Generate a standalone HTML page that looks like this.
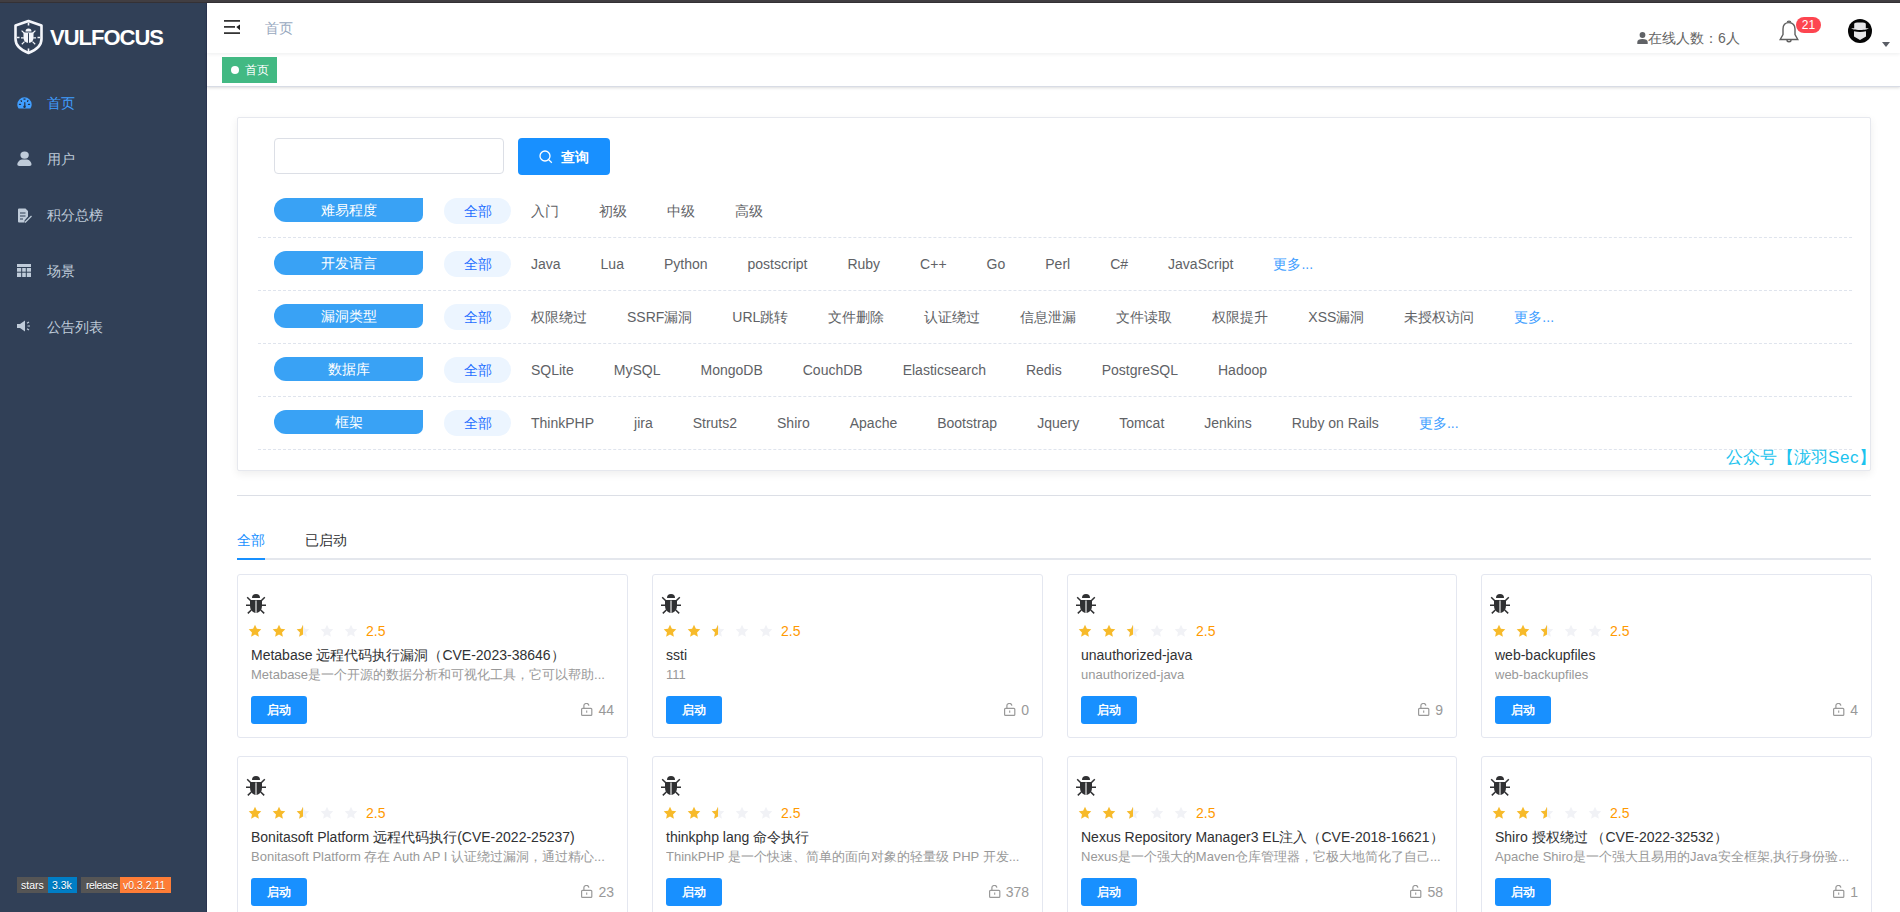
<!DOCTYPE html>
<html><head><meta charset="utf-8">
<style>
*{box-sizing:border-box;margin:0;padding:0}
html,body{width:1900px;height:912px;overflow:hidden;background:#fff;font-family:"Liberation Sans",sans-serif;font-size:14px;color:#606266}
#topbar{position:absolute;left:0;top:0;width:1900px;height:3px;background:linear-gradient(#413e42 0,#413e42 2px,#343135 2px)}
#side{position:absolute;left:0;top:3px;width:207px;height:909px;background:#314057;box-shadow:inset -1px 0 0 #2a3450}
#logo{position:absolute;left:14px;top:17px}
#logotxt{position:absolute;left:50px;top:22px;line-height:26px;color:#fff;font-weight:bold;font-size:22px;letter-spacing:-1px}
.mi{position:absolute;left:0;width:207px;height:56px;line-height:56px;color:#bfcbd9;font-size:14px}
.mi span{position:absolute;left:47px;top:0}
.mi svg{position:absolute;left:17px;top:21px}
.mi.act{color:#409eff}
#badges{position:absolute;left:17px;top:874px;height:16px;font-size:10px;line-height:16px;color:#fff}
#badges div{position:absolute;top:0;height:16px}#badges span{position:absolute;top:0;white-space:nowrap;font-size:10.5px;text-shadow:0 1px 0 rgba(1,1,1,.3)}
#main{position:absolute;left:207px;top:3px;width:1693px;height:909px;background:#fff}
#nav{position:absolute;z-index:2;left:0;top:0;width:1693px;height:50px;background:#fff;box-shadow:0 1px 4px rgba(0,21,41,.08)}
#tags{position:absolute;left:0;top:50px;width:1693px;height:34px;background:#fff;border-bottom:1px solid #d8dce5;box-shadow:0 1px 3px 0 rgba(0,0,0,.12),0 0 3px 0 rgba(0,0,0,.04)}
.tag{position:absolute;left:15px;top:4px;height:26px;line-height:26px;background:#42b983;color:#fff;font-size:12px;padding:0 8px 0 9px;width:55px;white-space:nowrap}
.tag:before{content:"";display:inline-block;width:8px;height:8px;border-radius:50%;background:#fff;margin-right:6px;vertical-align:0px}
#filter{position:absolute;left:30px;top:114px;width:1634px;height:354px;border:1px solid #e6e8ee;border-radius:2px;background:#fff;box-shadow:0 3px 8px 0 rgba(0,0,0,.07)}
.inp{position:absolute;left:36px;top:20px;width:230px;height:36px;border:1px solid #dcdfe6;border-radius:4px;background:#fff}
.btn{position:absolute;left:280px;top:20px;width:92px;height:37px;background:#1890ff;border-radius:4px;color:#fff;font-size:14px;line-height:37px}
.row{position:absolute;left:20px;width:1594px;height:53px;border-bottom:1px dashed #dfe4ed}
.lab{position:absolute;left:16px;top:13px;width:149px;height:24px;line-height:24px;background:#39a2f5;color:#fff;text-align:center;border-radius:12px 0 7px 12px;font-size:14px}
.opts{position:absolute;left:185px;top:13px;height:26px;line-height:26px;white-space:nowrap;font-size:14px;color:#606266}
.opts span{display:inline-block;padding:0 0 0 20px;height:26px;border-radius:13px;overflow:visible;vertical-align:top}
.opts span.on{background:#ecf5ff;color:#1f6fff;text-align:center;padding:0}
.opts span.more{color:#409eff}
#wm{position:absolute;left:1519px;top:443px;color:#1cc3ee;font-size:17px;letter-spacing:.6px;white-space:nowrap}
#divider{position:absolute;left:30px;top:492px;width:1634px;height:1px;background:#dcdfe6}
#tabs{position:absolute;left:30px;top:517px;width:1634px;height:40px}
#tabs .bar{position:absolute;left:0;bottom:0;width:100%;height:2px;background:#e4e7ed}
#tabs .ab{position:absolute;left:0;bottom:0;width:28px;height:2px;background:#1890ff}
#tabs span{position:absolute;top:0;line-height:40px;font-size:14px;color:#303133}
.card{position:absolute;width:391px;height:164px;border:1px solid #e4e7f0;border-radius:3px;background:#fff}
.card .bug{position:absolute;left:8px;top:19px}
.rate{position:absolute;left:8px;top:47px;width:200px;height:18px}
.st{position:absolute;top:0;width:18px;height:18px}
.st.on{fill:#f7ba2a}.st.off{fill:#f1f2f6}
.sc{position:absolute;left:120px;top:0;line-height:18px;font-size:14px;color:#ff9900}
.ti{position:absolute;left:13px;top:70px;line-height:20px;font-size:14px;color:#303133;white-space:nowrap}
.ds{position:absolute;left:13px;top:90px;line-height:20px;font-size:13px;color:#999;white-space:nowrap;overflow:hidden;width:362px}
.go{position:absolute;left:13px;top:121px;width:56px;height:28px;line-height:28px;text-align:center;background:#1890ff;color:#fff;font-size:12px;border-radius:3px;font-weight:bold}
.cnt{position:absolute;right:13px;top:125px;height:20px;line-height:20px;font-size:14px;color:#999;white-space:nowrap}
.cnt svg{vertical-align:-1px;margin-right:5px;margin-left:2px}
i{font-style:normal;display:inline-block;width:1em;text-align:center;text-indent:0}
</style></head><body>
<svg width="0" height="0" style="position:absolute"><defs>
<symbol id="star" viewBox="0 0 18 18"><path d="M9.00 2.80 L10.88 6.81 L15.28 7.36 L12.04 10.39 L12.88 14.74 L9.00 12.60 L5.12 14.74 L5.96 10.39 L2.72 7.36 L7.12 6.81Z"/></symbol>
<symbol id="starh" viewBox="0 0 18 18"><path fill="#f1f2f6" d="M9.00 2.80 L10.88 6.81 L15.28 7.36 L12.04 10.39 L12.88 14.74 L9.00 12.60 L5.12 14.74 L5.96 10.39 L2.72 7.36 L7.12 6.81Z"/><path fill="#f7ba2a" d="M9.00 2.80 L7.12 6.81 L2.72 7.36 L5.96 10.39 L5.12 14.74 L9.00 12.60Z"/></symbol>
<symbol id="bug" viewBox="0 0 20 20"><g fill="#303133"><path d="M6 4A4 4 0 0 1 14 4Z"/><path d="M4 6H16V11.5C16 15.8 13.6 18.8 10 18.8C6.4 18.8 4 15.8 4 11.5Z"/></g><path d="M10 6.5V18.8" stroke="#ddd" stroke-width="1.3"/><g stroke="#303133" stroke-width="1.5"><path d="M1.2 3.2L5 7M18.8 3.2L15 7M0 11.2H4.5M20 11.2H15.5M1.8 19.4L5.3 16M18.2 19.4L14.7 16"/></g></symbol>
<symbol id="lock" viewBox="0 0 12 13"><rect x="0.6" y="5.4" width="10.2" height="6.9" rx="0.9" fill="none" stroke="#999" stroke-width="1.2"/><path d="M2.9 5.4V3.3A2.5 2.5 0 0 1 7.9 2.6" fill="none" stroke="#999" stroke-width="1.2"/><path d="M5.7 7.6v2.2" stroke="#999" stroke-width="1.1"/></symbol>
</defs></svg>
<div id="topbar"></div>
<div id="side">
  <svg id="logo" width="31" height="36" viewBox="0 0 31 36" style="position:absolute;left:13px;top:16px"><path d="M15.5 2L28.5 6.5V20C28.5 27 22 31.5 15.5 34C9 31.5 2.5 27 2.5 20V6.5Z" fill="none" stroke="#f4f6fb" stroke-width="2.6" stroke-linejoin="round"/><g stroke="#f4f6fb" stroke-width="1.6"><path d="M15.5 3.5V6.5M15.5 29.5V33M4 18.5H6.5M24.5 18.5H27"/></g><g fill="#f4f6fb"><path d="M12.5 12.6A3 3.2 0 0 1 18.5 12.6Z"/><path d="M10.5 13.4H20.5V18.5C20.5 22 18.4 23.9 15.5 23.9S10.5 22 10.5 18.5Z"/></g><path d="M15.5 14.2V24" stroke="#314057" stroke-width="1"/><g stroke="#f4f6fb" stroke-width="1.2"><path d="M8.6 11.6L11.4 14.2M22.4 11.6L19.6 14.2M8 18.8H10.8M23 18.8H20.2M8.8 25.2L11.5 22.6M22.2 25.2L19.5 22.6"/></g></svg>
  <div id="logotxt">VULFOCUS</div>
  <div class="mi act" style="top:72px"><svg width="15" height="12" viewBox="0 0 15 12" style="left:16.5px;top:22px"><path d="M7.5 0.3A7.2 7.2 0 0 0 0.3 7.5C0.3 9 0.8 10.3 1.6 11.4H13.4C14.2 10.3 14.7 9 14.7 7.5A7.2 7.2 0 0 0 7.5 0.3Z" fill="#409eff"/><g stroke="#253247" stroke-width="1.2" stroke-linecap="round"><path d="M2.4 7.3H3.6M11.4 7.3H12.6M4.1 3.5L4.5 4.5M10.9 3.5L10.5 4.5M6.9 2.1H8.1M7.8 9.6V5.5"/></g><circle cx="7.5" cy="9.8" r="1.2" fill="#253247"/></svg><span><i>首</i><i>页</i></span></div>
  <div class="mi" style="top:128px"><svg width="15" height="15" viewBox="0 0 15 15" style="left:16.5px;top:20px"><g fill="#bfcbd9"><ellipse cx="7.6" cy="4.1" rx="4.2" ry="3.6"/><path d="M0.3 13.3C0.3 11.5 2.8 8.6 4.8 8.6H10.2C12.2 8.6 14.5 11.5 14.5 13.3C14.5 14.6 13.8 15 12.5 15H2.3C1 15 0.3 14.6 0.3 13.3Z"/></g></svg><span><i>用</i><i>户</i></span></div>
  <div class="mi" style="top:184px"><svg width="15" height="15" viewBox="0 0 15 15"><path d="M1 1.5Q1 0.5 2 0.5H8.5L11 3V8.5L7.5 12.5V14.5H2Q1 14.5 1 13.5Z" fill="#bfcbd9"/><g stroke="#304156" stroke-width="1.2"><path d="M3 5H8.5M3 8H8.5M3 11H6"/></g><path d="M8 14.5L14.5 8" stroke="#bfcbd9" stroke-width="1.3"/></svg><span><i>积</i><i>分</i><i>总</i><i>榜</i></span></div>
  <div class="mi" style="top:240px"><svg width="14" height="13" viewBox="0 0 14 13"><rect x="0" y="0" width="14" height="13" fill="#bfcbd9"/><g stroke="#304156" stroke-width="1"><path d="M0 3.5H14M0 8.2H14M4.7 3.5V13M9.3 3.5V13"/></g></svg><span><i>场</i><i>景</i></span></div>
  <div class="mi" style="top:296px"><svg width="14" height="12" viewBox="0 0 14 12"><path d="M0 4H3L8 0.5V11.5L3 8H0Z" fill="#bfcbd9"/><g stroke="#bfcbd9" stroke-width="1.2"><path d="M10 3.2L12 2M10.5 6H13M10 8.8L12 10"/></g></svg><span><i>公</i><i>告</i><i>列</i><i>表</i></span></div>
<div id="badges"><div style="left:0;width:31px;background:#555"></div><div style="left:31px;width:29px;background:#007ec6"></div><div style="left:64px;width:39px;background:#555"></div><div style="left:103px;width:51px;background:#fe7d37"></div><span style="left:4px">stars</span><span style="left:35px">3.3k</span><span style="left:69px;letter-spacing:-.4px">release</span><span style="left:106px">v0.3.2.11</span></div>
</div>
<div id="main">
  <div id="nav">
    <svg style="position:absolute;left:17px;top:17px" width="16" height="15" viewBox="0 0 16 15"><g fill="#1f1f1f"><rect x="0" y="0.1" width="16" height="1.6"/><rect x="0" y="6.1" width="11" height="1.6"/><rect x="0" y="12.3" width="16" height="1.6"/><path d="M16 4.5V10.2L12.3 7Z"/></g></svg>
    <div style="position:absolute;left:58px;top:0;line-height:50px;font-size:14px;color:#97a8be"><i>首</i><i>页</i></div>
    <svg style="position:absolute;left:1430px;top:29px" width="11" height="12" viewBox="0 0 11 12"><g fill="#606266"><circle cx="5.5" cy="3" r="2.9"/><path d="M0.3 12V10C0.3 8.2 2.2 7 5.5 7S10.7 8.2 10.7 10V12Z"/></g></svg>
    <div style="position:absolute;left:1441px;top:25px;line-height:20px;font-size:14px;color:#666;white-space:nowrap"><i>在</i><i>线</i><i>人</i><i>数</i><i>：</i>6<i>人</i></div>
    <svg style="position:absolute;left:1572px;top:17px" width="20" height="24" viewBox="0 0 20 24"><g fill="none" stroke="#5f5f5f" stroke-width="1.4"><path d="M10 2.6C6 2.6 4 5.5 4 9V14.5L1.2 19.5H18.8L16 14.5V9C16 5.5 14 2.6 10 2.6Z"/><path d="M8.3 2.6A1.7 1.5 0 0 1 11.7 2.6"/><path d="M8 20A2 1.8 0 0 0 12 20"/></g></svg>
    <div style="position:absolute;left:1589px;top:14px;width:25px;height:16px;border-radius:8px;background:#fd4550;color:#fff;font-size:12px;line-height:16px;text-align:center">21</div>
    <svg style="position:absolute;left:1641px;top:16px" width="24" height="24" viewBox="0 0 24 24"><circle cx="12" cy="12" r="12" fill="#050505"/><path d="M6.2 4.8C6.2 3.9 8 3.6 12 3.6S17.8 3.9 17.8 4.8V9.2C19 9.1 20 9 20.6 8.9C20.2 10.2 17 10.9 12 10.9S3.8 10.2 3.4 8.9C4 9 5 9.1 6.2 9.2Z" fill="#e6e6e8"/><path d="M6 12.2C8 12.7 10 12.9 12 12.9S16 12.7 18 12.2V17.6L12 21L6 17.6Z" fill="#e6e6e8"/></svg>
    <svg style="position:absolute;left:1675px;top:39px" width="8" height="5" viewBox="0 0 8 5"><path d="M0 0H8L4 5Z" fill="#5a5e66"/></svg>
  </div>
  <div id="tags"><div class="tag"><i>首</i><i>页</i></div></div>
  <div id="filter">
    <div class="inp"></div>
    <div class="btn"><svg style="position:absolute;left:21px;top:12px" width="14" height="14" viewBox="0 0 14 14"><circle cx="6" cy="6" r="5" fill="none" stroke="#fff" stroke-width="1.3"/><path d="M9.6 9.6L12.8 12.8" stroke="#fff" stroke-width="1.3"/></svg><span style="position:absolute;left:43px;top:1px;font-weight:bold"><i>查</i><i>询</i></span></div>
    <div class="row" style="top:67px"><div class="lab"><i>难</i><i>易</i><i>程</i><i>度</i></div><div class="opts"><span style="width:67px;margin-left:1px" class="on"><i>全</i><i>部</i></span><span style="width:68.00px"><i>入</i><i>门</i></span><span style="width:68.00px"><i>初</i><i>级</i></span><span style="width:68.00px"><i>中</i><i>级</i></span><span style="width:68.00px"><i>高</i><i>级</i></span></div></div>
    <div class="row" style="top:120px"><div class="lab"><i>开</i><i>发</i><i>语</i><i>言</i></div><div class="opts"><span style="width:67px;margin-left:1px" class="on"><i>全</i><i>部</i></span><span style="width:69.58px">Java</span><span style="width:63.36px">Lua</span><span style="width:83.59px">Python</span><span style="width:99.92px">postscript</span><span style="width:72.69px">Ruby</span><span style="width:66.47px">C++</span><span style="width:58.69px">Go</span><span style="width:64.91px">Perl</span><span style="width:57.91px">C#</span><span style="width:105.36px">JavaScript</span><span style="width:79.67px" class="more"><i>更</i><i>多</i>...</span></div></div>
    <div class="row" style="top:173px"><div class="lab"><i>漏</i><i>洞</i><i>类</i><i>型</i></div><div class="opts"><span style="width:67px;margin-left:1px" class="on"><i>全</i><i>部</i></span><span style="width:96.00px"><i>权</i><i>限</i><i>绕</i><i>过</i></span><span style="width:105.34px">SSRF<i>漏</i><i>洞</i></span><span style="width:96.02px">URL<i>跳</i><i>转</i></span><span style="width:96.00px"><i>文</i><i>件</i><i>删</i><i>除</i></span><span style="width:96.00px"><i>认</i><i>证</i><i>绕</i><i>过</i></span><span style="width:96.00px"><i>信</i><i>息</i><i>泄</i><i>漏</i></span><span style="width:96.00px"><i>文</i><i>件</i><i>读</i><i>取</i></span><span style="width:96.00px"><i>权</i><i>限</i><i>提</i><i>升</i></span><span style="width:96.02px">XSS<i>漏</i><i>洞</i></span><span style="width:110.00px"><i>未</i><i>授</i><i>权</i><i>访</i><i>问</i></span><span style="width:79.67px" class="more"><i>更</i><i>多</i>...</span></div></div>
    <div class="row" style="top:226px"><div class="lab"><i>数</i><i>据</i><i>库</i></div><div class="opts"><span style="width:67px;margin-left:1px" class="on"><i>全</i><i>部</i></span><span style="width:82.81px">SQLite</span><span style="width:86.69px">MySQL</span><span style="width:102.27px">MongoDB</span><span style="width:99.92px">CouchDB</span><span style="width:123.27px">Elasticsearch</span><span style="width:75.80px">Redis</span><span style="width:116.27px">PostgreSQL</span><span style="width:89.05px">Hadoop</span></div></div>
    <div class="row" style="top:279px"><div class="lab"><i>框</i><i>架</i></div><div class="opts"><span style="width:67px;margin-left:1px" class="on"><i>全</i><i>部</i></span><span style="width:103.03px">ThinkPHP</span><span style="width:58.67px">jira</span><span style="width:84.36px">Struts2</span><span style="width:72.69px">Shiro</span><span style="width:87.48px">Apache</span><span style="width:99.94px">Bootstrap</span><span style="width:82.03px">Jquery</span><span style="width:85.12px">Tomcat</span><span style="width:87.47px">Jenkins</span><span style="width:127.16px">Ruby on Rails</span><span style="width:79.67px" class="more"><i>更</i><i>多</i>...</span></div></div>
  </div>
  <div id="wm"><i>公</i><i>众</i><i>号</i><i>【</i><i>泷</i><i>羽</i>Sec<i>】</i></div>
  <div id="divider"></div>
  <div id="tabs"><div class="bar"></div><div class="ab"></div><span style="left:0;color:#1890ff"><i>全</i><i>部</i></span><span style="left:68px"><i>已</i><i>启</i><i>动</i></span></div>
  <div class="card" style="left:30px;top:571px"><svg class="bug" width="20" height="20"><use href="#bug"/></svg><div class="rate"><svg class="st on" style="left:0"><use href="#star"/></svg><svg class="st on" style="left:24px"><use href="#star"/></svg><svg class="st half" style="left:48px"><use href="#starh"/></svg><svg class="st off" style="left:72px"><use href="#star"/></svg><svg class="st off" style="left:96px"><use href="#star"/></svg><span class="sc">2.5</span></div><div class="ti">Metabase <i>远</i><i>程</i><i>代</i><i>码</i><i>执</i><i>行</i><i>漏</i><i>洞</i><i>（</i>CVE-2023-38646<i>）</i></div><div class="ds">Metabase<i>是</i><i>一</i><i>个</i><i>开</i><i>源</i><i>的</i><i>数</i><i>据</i><i>分</i><i>析</i><i>和</i><i>可</i><i>视</i><i>化</i><i>工</i><i>具</i><i>，</i><i>它</i><i>可</i><i>以</i><i>帮</i><i>助</i>...</div><div class="go"><i>启</i><i>动</i></div><div class="cnt"><svg width="12" height="13"><use href="#lock"/></svg><span>44</span></div></div>
  <div class="card" style="left:445px;top:571px"><svg class="bug" width="20" height="20"><use href="#bug"/></svg><div class="rate"><svg class="st on" style="left:0"><use href="#star"/></svg><svg class="st on" style="left:24px"><use href="#star"/></svg><svg class="st half" style="left:48px"><use href="#starh"/></svg><svg class="st off" style="left:72px"><use href="#star"/></svg><svg class="st off" style="left:96px"><use href="#star"/></svg><span class="sc">2.5</span></div><div class="ti">ssti</div><div class="ds">111</div><div class="go"><i>启</i><i>动</i></div><div class="cnt"><svg width="12" height="13"><use href="#lock"/></svg><span>0</span></div></div>
  <div class="card" style="left:860px;top:571px;width:390px"><svg class="bug" width="20" height="20"><use href="#bug"/></svg><div class="rate"><svg class="st on" style="left:0"><use href="#star"/></svg><svg class="st on" style="left:24px"><use href="#star"/></svg><svg class="st half" style="left:48px"><use href="#starh"/></svg><svg class="st off" style="left:72px"><use href="#star"/></svg><svg class="st off" style="left:96px"><use href="#star"/></svg><span class="sc">2.5</span></div><div class="ti">unauthorized-java</div><div class="ds">unauthorized-java</div><div class="go"><i>启</i><i>动</i></div><div class="cnt"><svg width="12" height="13"><use href="#lock"/></svg><span>9</span></div></div>
  <div class="card" style="left:1274px;top:571px"><svg class="bug" width="20" height="20"><use href="#bug"/></svg><div class="rate"><svg class="st on" style="left:0"><use href="#star"/></svg><svg class="st on" style="left:24px"><use href="#star"/></svg><svg class="st half" style="left:48px"><use href="#starh"/></svg><svg class="st off" style="left:72px"><use href="#star"/></svg><svg class="st off" style="left:96px"><use href="#star"/></svg><span class="sc">2.5</span></div><div class="ti">web-backupfiles</div><div class="ds">web-backupfiles</div><div class="go"><i>启</i><i>动</i></div><div class="cnt"><svg width="12" height="13"><use href="#lock"/></svg><span>4</span></div></div>
  <div class="card" style="left:30px;top:753px"><svg class="bug" width="20" height="20"><use href="#bug"/></svg><div class="rate"><svg class="st on" style="left:0"><use href="#star"/></svg><svg class="st on" style="left:24px"><use href="#star"/></svg><svg class="st half" style="left:48px"><use href="#starh"/></svg><svg class="st off" style="left:72px"><use href="#star"/></svg><svg class="st off" style="left:96px"><use href="#star"/></svg><span class="sc">2.5</span></div><div class="ti">Bonitasoft Platform <i>远</i><i>程</i><i>代</i><i>码</i><i>执</i><i>行</i>(CVE-2022-25237)</div><div class="ds">Bonitasoft Platform <i>存</i><i>在</i> Auth AP I <i>认</i><i>证</i><i>绕</i><i>过</i><i>漏</i><i>洞</i><i>，</i><i>通</i><i>过</i><i>精</i><i>心</i>...</div><div class="go"><i>启</i><i>动</i></div><div class="cnt"><svg width="12" height="13"><use href="#lock"/></svg><span>23</span></div></div>
  <div class="card" style="left:445px;top:753px"><svg class="bug" width="20" height="20"><use href="#bug"/></svg><div class="rate"><svg class="st on" style="left:0"><use href="#star"/></svg><svg class="st on" style="left:24px"><use href="#star"/></svg><svg class="st half" style="left:48px"><use href="#starh"/></svg><svg class="st off" style="left:72px"><use href="#star"/></svg><svg class="st off" style="left:96px"><use href="#star"/></svg><span class="sc">2.5</span></div><div class="ti">thinkphp lang <i>命</i><i>令</i><i>执</i><i>行</i></div><div class="ds">ThinkPHP <i>是</i><i>一</i><i>个</i><i>快</i><i>速</i><i>、</i><i>简</i><i>单</i><i>的</i><i>面</i><i>向</i><i>对</i><i>象</i><i>的</i><i>轻</i><i>量</i><i>级</i> PHP <i>开</i><i>发</i>...</div><div class="go"><i>启</i><i>动</i></div><div class="cnt"><svg width="12" height="13"><use href="#lock"/></svg><span>378</span></div></div>
  <div class="card" style="left:860px;top:753px;width:390px"><svg class="bug" width="20" height="20"><use href="#bug"/></svg><div class="rate"><svg class="st on" style="left:0"><use href="#star"/></svg><svg class="st on" style="left:24px"><use href="#star"/></svg><svg class="st half" style="left:48px"><use href="#starh"/></svg><svg class="st off" style="left:72px"><use href="#star"/></svg><svg class="st off" style="left:96px"><use href="#star"/></svg><span class="sc">2.5</span></div><div class="ti">Nexus Repository Manager3 EL<i>注</i><i>入</i><i>（</i>CVE-2018-16621<i>）</i></div><div class="ds">Nexus<i>是</i><i>一</i><i>个</i><i>强</i><i>大</i><i>的</i>Maven<i>仓</i><i>库</i><i>管</i><i>理</i><i>器</i><i>，</i><i>它</i><i>极</i><i>大</i><i>地</i><i>简</i><i>化</i><i>了</i><i>自</i><i>己</i>...</div><div class="go"><i>启</i><i>动</i></div><div class="cnt"><svg width="12" height="13"><use href="#lock"/></svg><span>58</span></div></div>
  <div class="card" style="left:1274px;top:753px"><svg class="bug" width="20" height="20"><use href="#bug"/></svg><div class="rate"><svg class="st on" style="left:0"><use href="#star"/></svg><svg class="st on" style="left:24px"><use href="#star"/></svg><svg class="st half" style="left:48px"><use href="#starh"/></svg><svg class="st off" style="left:72px"><use href="#star"/></svg><svg class="st off" style="left:96px"><use href="#star"/></svg><span class="sc">2.5</span></div><div class="ti">Shiro <i>授</i><i>权</i><i>绕</i><i>过</i> <i>（</i>CVE-2022-32532<i>）</i></div><div class="ds">Apache Shiro<i>是</i><i>一</i><i>个</i><i>强</i><i>大</i><i>且</i><i>易</i><i>用</i><i>的</i>Java<i>安</i><i>全</i><i>框</i><i>架</i>,<i>执</i><i>行</i><i>身</i><i>份</i><i>验</i>...</div><div class="go"><i>启</i><i>动</i></div><div class="cnt"><svg width="12" height="13"><use href="#lock"/></svg><span>1</span></div></div>
</div>
</body></html>
